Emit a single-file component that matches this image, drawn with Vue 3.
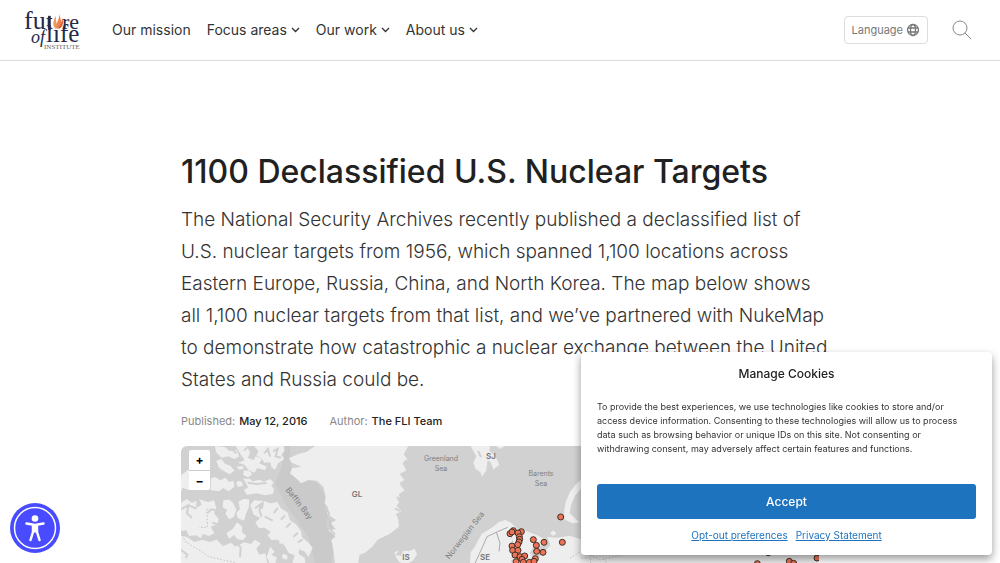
<script setup>
const nav = [
  { label: 'Our mission', menu: false },
  { label: 'Focus areas', menu: true },
  { label: 'Our work', menu: true },
  { label: 'About us', menu: true },
]

const targets = [
  [542, 231], [547, 307], [492, 307], [460, 299], [469, 316], [470, 334], [489, 337], [466, 356],
  [390, 281], [400, 272], [424, 275], [396, 276], [414, 279], [418, 290], [419, 298], [417, 306],
  [413, 314], [396, 318], [398, 331], [414, 331], [405, 345], [420, 350], [434, 348], [426, 358],
  [408, 365], [430, 367], [448, 367], [462, 364], [1132, 371], [1165, 338], [1228, 364],
  [1241, 370], [1311, 354],
]
</script>

<template>
  <div class="page">
    <header class="bar">
      <a class="logo" href="#" aria-label="Future of Life Institute">
        <svg viewBox="0 0 56 40" aria-hidden="true">
          <g class="logo-word">
            <text x="0" y="19" font-size="26">fu</text>
            <text x="22" y="19" font-size="24">t</text>
            <text x="38" y="19" font-size="22">re</text>
            <text x="7" y="33" font-size="18" font-style="italic">of</text>
            <text x="22" y="32" font-size="25">life</text>
          </g>
          <path d="M25.500 6v14" stroke="#25294a" stroke-width="2.500" />
          <path d="M32 6c-3 4-4 10 0 13 3-3-1-7 0-13Z" fill="#ef9b55" />
          <path d="M35 4c1 6-4 9-2 15 7-3 4-9 2-15Z" fill="#ee8450" />
          <path d="M38 8c0 5-2 8-4 11 5-1 6-7 4-11Z" fill="#d95a34" />
          <text class="logo-sub" x="20" y="39" font-size="7">INSTITUTE</text>
        </svg>
      </a>
      <nav class="nav" aria-label="Main">
        <a v-for="item in nav" :key="item.label" href="#">
          {{ item.label }}
          <svg v-if="item.menu" class="chevron" viewBox="0 0 9 6" aria-hidden="true">
            <path d="M1 1 4.500 4.500 8 1" />
          </svg>
        </a>
      </nav>
      <button class="language" type="button">
        Language
        <svg viewBox="0 0 14 14" aria-hidden="true">
          <circle cx="7" cy="7" r="5.500" />
          <ellipse cx="7" cy="7" rx="2.500" ry="5.500" />
          <path d="M2 5h10M2 9h10" />
        </svg>
      </button>
      <button class="search" type="button" aria-label="Search">
        <svg viewBox="0 0 20 20" aria-hidden="true">
          <circle cx="8" cy="8" r="7" />
          <path d="m13 13 6 6" />
        </svg>
      </button>
    </header>

    <main class="article">
      <h1>1100 Declassified U.S. Nuclear Targets</h1>
      <p class="lead">
        The National Security Archives recently published a declassified list of U.S. nuclear
        targets from 1956, which spanned 1,100 locations across Eastern Europe, Russia, China, and
        North Korea. The map below shows all 1,100 nuclear targets from that list, and we’ve
        partnered with NukeMap to demonstrate how catastrophic a nuclear exchange between the United
        States and Russia could be.
      </p>
      <dl class="meta">
        <div><dt>Published:</dt><dd>May 12, 2016</dd></div>
        <div><dt>Author:</dt><dd>The FLI Team</dd></div>
      </dl>

      <section class="map" aria-label="Map of nuclear targets">
        <svg class="map-art" viewBox="0 0 638 400" preserveAspectRatio="xMinYMin slice" aria-hidden="true">
          <rect width="638" height="400" fill="#d1d1d1" />
          <g transform="translate(-6 -6) scale(.33333)">
            <path class="shelf" d="M330 18 320 80 300 130 330 190 400 290 420 370H470L480 300 450 170 430 130 350 100 345 18Z" />
            <g class="land">
              <path d="M420 18 395 35 370 42 342 55 350 68 380 80 352 84 345 100 365 116 378 130 400 120 425 122 445 140 452 170 449 190 460 205 456 222 484 240 468 249 482 268 459 270 482 289 469 300 475 330 480 370 480 1000 550 1000 550 370 553 345 570 338 592 320 608 299 645 281 672 260 669 235 663 222 679 214 665 197 677 180 671 163 689 151 675 134 688 119 674 102 694 91 684 72 699 61 686 43 700 18Z" />
              <path d="M120 18 149 21 164 33 184 29 193 49 179 57 160 49 140 53 123 37Z" />
              <path d="M124 62 139 57 150 71 167 78 178 92 163 103 143 91 132 83Z" />
              <path d="M182 18H215L226 38 218 53 236 60 242 49 261 56 253 70 275 80 270 91 247 84 239 98 221 91 208 74 189 68 209 61 196 42Z" />
              <path d="M237 18H325L329 31 319 44 328 57 309 70 300 89 289 81 286 67 268 68 259 54 244 47 250 33Z" />
              <path d="M184 80 203 78 207 86 193 89Z" />
              <path d="M206 91 223 92 232 103 219 112 205 105Z" />
              <path d="M108 115 121 111 136 121 151 113 162 126 176 122 178 140 161 154 144 144 132 154 107 151Z" />
              <path d="M188 122 201 125 204 137 190 141 183 132Z" />
              <path d="M204 116 224 116 231 124 253 119 267 125 285 117 296 127 289 137 297 148 294 162 270 166 244 160 215 164 207 149 219 143 214 131Z" />
              <path d="M18 106 42 88 49 116 56 145 42 151 23 143 18 155Z" />
              <path d="M18 188 35 177 51 188 65 183 63 203 80 195 73 178 99 186 117 181 124 205 117 220 131 237 128 252 107 260 118 280 102 288 83 282 78 295 63 286 42 288 34 271 18 273Z" />
              <path d="M145 181 163 179 174 188 184 209 177 230 163 238 151 221 157 210 143 202Z" />
              <path d="M190 185 205 177 222 178 222 200 213 222 207 242 189 235 184 220 195 207Z" />
              <path d="M226 195 238 181 267 183 286 190 307 186 317 204 338 218 345 241 363 253 378 274 381 292 399 307 413 323 400 351 390 335 372 328 371 342 389 353 391 370H352L359 346 341 339 328 316 309 299 289 300 278 286 287 276 269 263 251 264 241 247 256 234 236 224Z" />
              <path d="M187 247 202 261 201 277 214 288 204 300 187 298 177 284 163 296 154 280 173 267Z" />
              <path d="M18 286 37 292 58 306 82 299 104 306 125 299 144 318 168 308 181 320 207 307 228 312 239 299 257 310 244 326 253 344 271 340 277 370V1000H18Z" />
              <path d="M286 320 299 335 289 344 305 352 301 370H284L275 350Z" />
              <path d="M312 291 324 295 326 307 314 313Z" />
              <path d="M323 341 338 347 335 359 322 355Z" />
            </g>
            <path class="water" d="M18 207 40 196 36 220 51 234M40 196 65 206M125 211 108 208 98 219M240 205 261 190 253 211 260 230M132 255 112 247M18 329 37 344 32 354M183 306 197 322 195 351M203 264 226 286 223 304M264 188 260 207M269 229 293 242M309 204 296 219M330 226 318 239M347 249 333 263M369 278 355 290M383 299 368 307M184 40 171 28M207 32 217 22M267 40 279 27 285 50M294 34 308 27 302 49 318 53M218 128 244 132 275 129" />
            <path class="border-line" d="M96 206 97 262H72M23 285 30 304 50 317 77 333 103 350 140 359 180 367" />
            <path d="M450 198 462 220 458 260 480 283M676 130 690 124M668 177 682 190" class="water" />
          </g>
          <g transform="translate(199 -6) scale(.33333)">
            <g class="land">
              <path d="M272 18 330 18 328 33 339 42 349 54 358 75 340 88 332 67 323 60 319 91 306 110 301 96 287 87 280 69 289 49Z" />
              <path d="M349 18H374L361 27Z" />
              <path d="M43 336 56 332 47 345 63 347 70 332 88 333 104 326 111 343 100 361 78 374 58 366 49 353Z" />
              <path d="M270 370 272 337 284 321 294 302 305 281 324 270 342 259 356 246 376 240 393 248 409 264 437 272 470 285 498 300 488 318 462 316 450 339 460 353 491 338 511 316 502 291 532 293 568 287 604 298 620 240 670 210 720 280 770 190 900 190 1317 18V1000H270Z" />
              <path d="M605 118 588 132 570 156 558 183 552 215 554 239 579 250 598 247 580 230 569 220 573 194 586 166 605 145Z" />
              <path d="m510 280 10-9 9 9-9 8Z" />
            </g>
            <path class="water" d="M273 53 286 47M294 33 303 51M50 171 65 180M45 205 60 213M80 60 70 72M480 315 465 340 480 350" />
            <path class="border-line solid" d="M285 370 297 344 310 315 321 290 349 277 383 262M349 277 360 309 357 334" />
            <path class="border-line" d="M570 355 604 332 660 360 750 340M390 272 399 310 395 370M604 354H632V390M670 355 684 375" />
          </g>
          <g class="sea-label">
            <text x="260" y="15">Greenland</text>
            <text x="260" y="25">Sea</text>
            <text x="360" y="30">Barents</text>
            <text x="360" y="40">Sea</text>
            <text class="slanted" transform="translate(116 59) rotate(52)">Baffin Bay</text>
            <text class="slanted" transform="translate(286 91) rotate(-52)">Norwegian Sea</text>
          </g>
          <g class="country">
            <text x="176" y="51">GL</text>
            <text x="310" y="13">SJ</text>
            <text x="225" y="114">IS</text>
            <text x="304" y="114">SE</text>
          </g>
          <g transform="translate(199 -6) scale(.33333)">
            <circle v-for="([x, y], i) in targets" :key="i" class="target" :cx="x" :cy="y" r="9" />
          </g>
        </svg>
        <div class="zoom">
          <button type="button" aria-label="Zoom in">+</button>
          <button type="button" aria-label="Zoom out">−</button>
        </div>
      </section>
    </main>

    <button class="access" type="button" aria-label="Accessibility menu">
      <svg viewBox="0 0 50 50" aria-hidden="true">
        <circle cx="25" cy="25" r="25" fill="#484bff" />
        <circle cx="25" cy="25" r="20.500" fill="none" stroke="#fff" stroke-width="1.500" />
        <circle cx="25" cy="15.500" r="3.300" fill="#fff" />
        <path d="M16.500 20.500 25 22l8.500-1.500M23 23v6l-2.500 8M27 23v6l2.500 8" fill="none" stroke="#fff" stroke-width="2.500" stroke-linecap="round" stroke-linejoin="round" />
        <path d="M22 21.500h6v8h-6Z" fill="#fff" />
      </svg>
    </button>

    <section class="cookies" role="dialog" aria-labelledby="cookie-title">
      <h2 id="cookie-title">Manage Cookies</h2>
      <p>
        To provide the best experiences, we use technologies like cookies to store and/or access
        device information. Consenting to these technologies will allow us to process data such as
        browsing behavior or unique IDs on this site. Not consenting or withdrawing consent, may
        adversely affect certain features and functions.
      </p>
      <button type="button">Accept</button>
      <div class="links">
        <a href="#">Opt-out preferences</a>
        <a href="#">Privacy Statement</a>
      </div>
    </section>
  </div>
</template>

<style>
body {
  margin: 0;
  overflow: hidden;
}
</style>

<style scoped>
.page {
  font-family: Inter, 'Liberation Sans', sans-serif;
  color: #212121;
}
button {
  font-family: inherit;
  cursor: pointer;
}
.bar {
  display: flex;
  align-items: center;
  height: 60px;
  padding: 0 28px 0 24px;
  border-bottom: 1px solid #dcdcdc;
}
.logo {
  display: flex;
}
.logo svg {
  width: 56px;
  height: 40px;
  overflow: visible;
}
.logo-word {
  font-family: 'Liberation Serif', serif;
  fill: #25294a;
}
.logo-sub {
  font-family: 'Liberation Serif', serif;
  fill: #666;
}
.nav {
  display: flex;
  gap: 16px;
  margin-left: 32px;
}
.nav a {
  display: flex;
  align-items: center;
  gap: 4px;
  color: #333;
  font-size: 14px;
  line-height: 20px;
  text-decoration: none;
  white-space: nowrap;
}
.chevron {
  width: 9px;
  height: 6px;
  fill: none;
  stroke: #333;
  stroke-width: 1.3;
}
.language {
  display: flex;
  align-items: center;
  gap: 3px;
  height: 28px;
  margin-left: auto;
  padding: 0 7px;
  border: 1px solid #ddd;
  border-radius: 4px;
  background: #fff;
  color: #777;
  font-size: 11px;
}
.language svg {
  width: 14px;
  height: 14px;
  fill: none;
  stroke: #777;
  stroke-width: 1.3;
}
.search {
  display: flex;
  margin-left: 24px;
  padding: 0;
  border: 0;
  background: none;
}
.search svg {
  width: 20px;
  height: 20px;
  fill: none;
  stroke: #888;
}
.article {
  max-width: 638px;
  margin: 0 auto;
  padding: 90px 24px 0;
}
h1 {
  margin: 0;
  font-size: 32px;
  font-weight: 500;
  line-height: 42px;
}
.lead {
  margin: 11px -10px 0 0;
  color: #333;
  font-size: 19px;
  font-weight: 300;
  line-height: 32px;
}
.meta {
  display: flex;
  gap: 22px;
  margin: 17px 0;
  font-size: 11px;
  line-height: 16px;
}
.meta div {
  display: flex;
  gap: 4px;
}
dt {
  color: #888;
}
dd {
  margin: 0;
  font-weight: 500;
}
.map {
  position: relative;
  border-radius: 6px 6px 0 0;
  overflow: hidden;
}
.map-art {
  display: block;
  width: 100%;
}
.shelf {
  fill: #cacaca;
}
.land {
  fill: #eee;
}
.water {
  fill: none;
  stroke: #d1d1d1;
  stroke-width: 6;
}
.border-line {
  fill: none;
  stroke: #c4c4c4;
  stroke-width: 3;
  stroke-dasharray: 5 5;
}
.border-line.solid {
  stroke: #aaa;
  stroke-dasharray: none;
}
.sea-label {
  fill: #808080;
  font-size: 7px;
  text-anchor: middle;
}
.slanted {
  font-size: 8px;
}
.country {
  fill: #777;
  font-size: 8px;
  font-weight: 600;
  text-anchor: middle;
}
.target {
  fill: #ed7258;
  stroke: #3d3024;
  stroke-width: 3;
}
.zoom {
  position: absolute;
  top: 4px;
  left: 8px;
  display: grid;
  border-radius: 2px;
  background: #fff;
}
.zoom button {
  width: 21px;
  height: 20px;
  padding: 0;
  border: 0;
  background: none;
  font-size: 12px;
  font-weight: 700;
  line-height: 18px;
}
.zoom button + button {
  border-top: 1px solid #ccc;
}
.access {
  position: fixed;
  bottom: 10px;
  left: 10px;
  display: flex;
  padding: 0;
  border: 0;
  border-radius: 50%;
  background: none;
}
.access svg {
  width: 50px;
  height: 50px;
}
.cookies {
  position: fixed;
  right: 8px;
  bottom: 8px;
  box-sizing: border-box;
  width: 411px;
  max-width: calc(100% - 16px);
  padding: 12px 16px;
  border-radius: 4px;
  background: #fff;
  box-shadow: 0 4px 8px rgba(0, 0, 0, 0.4);
}
.cookies h2 {
  margin: 0;
  font-size: 12px;
  font-weight: 500;
  line-height: 20px;
  text-align: center;
}
.cookies p {
  margin: 16px 0 28px;
  padding-right: 6px;
  color: #333;
  font-size: 9px;
  line-height: 14px;
}
.cookies button {
  display: block;
  width: 100%;
  height: 35px;
  border: 0;
  border-radius: 3px;
  background: #1e73be;
  color: #fff;
  font-size: 12px;
  font-weight: 500;
}
.links {
  display: flex;
  justify-content: center;
  gap: 8px;
  margin-top: 8px;
  font-size: 10px;
  line-height: 16px;
}
.links a {
  color: #1e73be;
}
</style>
